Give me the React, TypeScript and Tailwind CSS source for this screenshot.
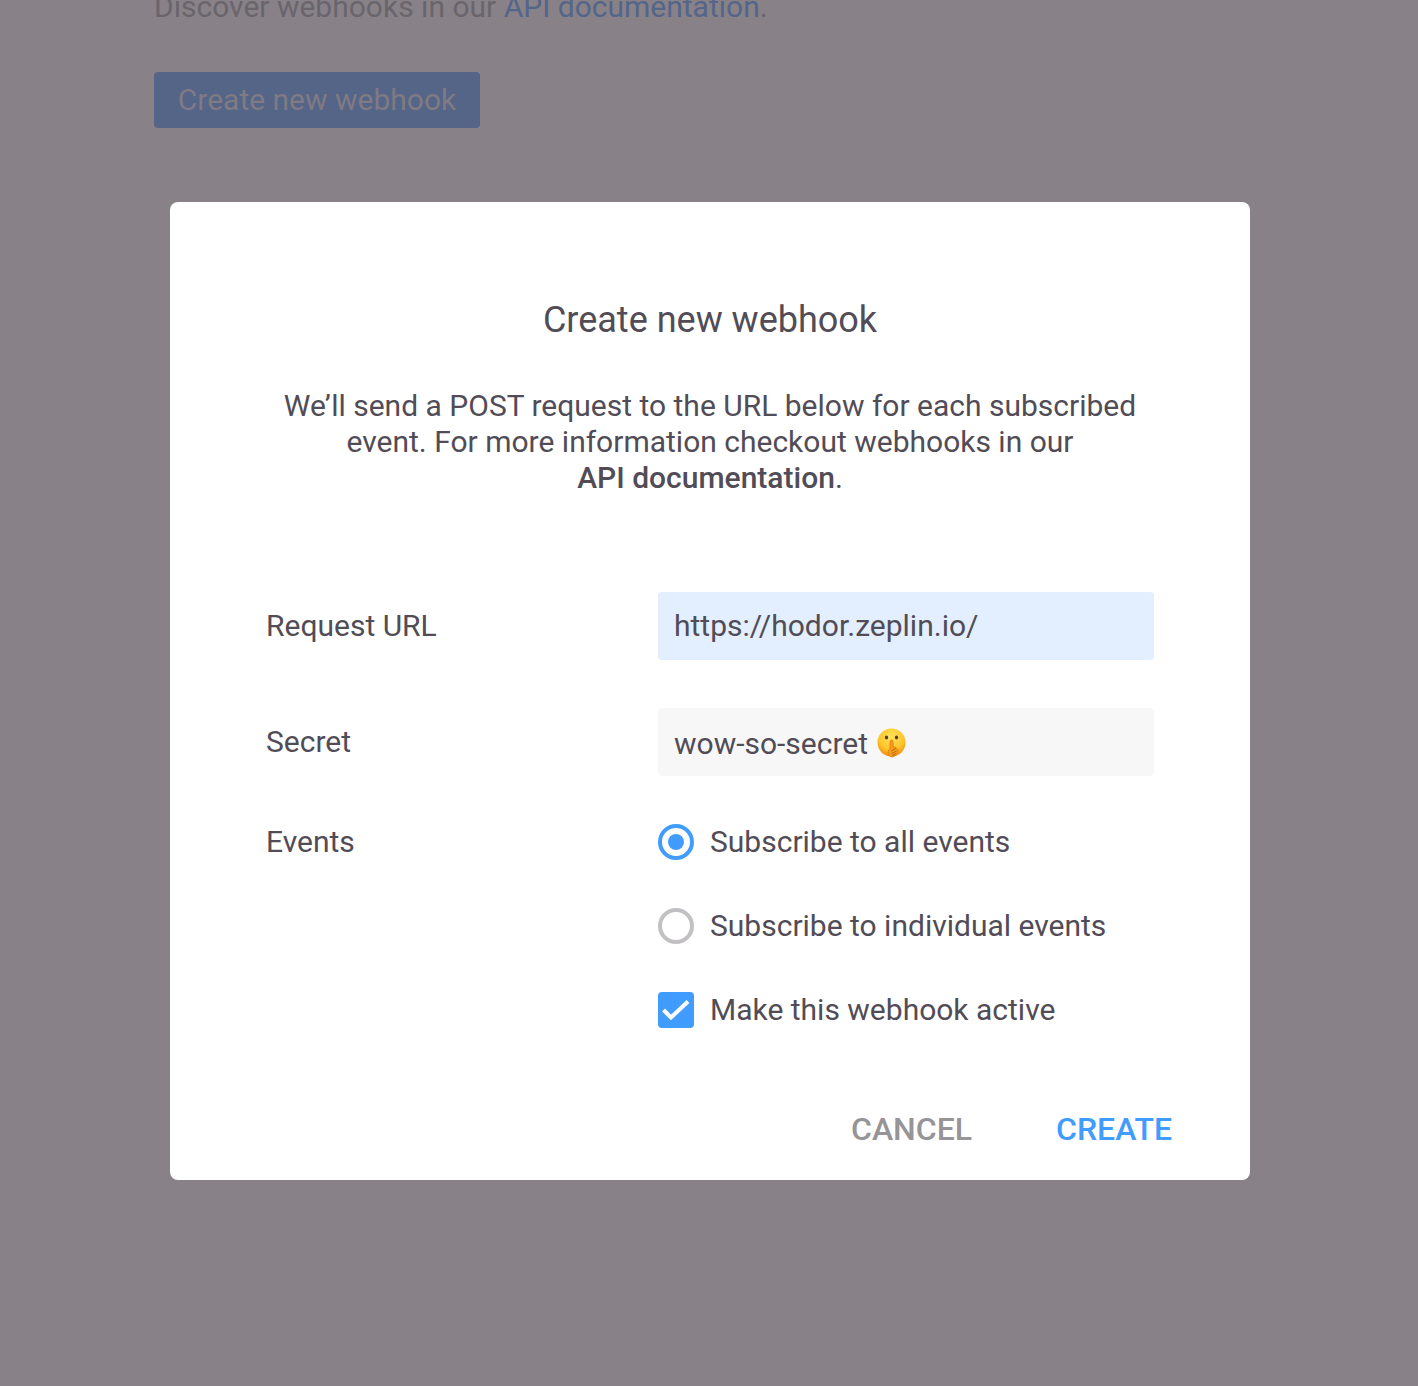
const ShushFace = () => (
  <svg width="30" height="30" viewBox="0 0 30 30" className="-mt-[2px]">
    <defs>
      <radialGradient id="face" cx="50%" cy="30%" r="70%">
        <stop offset="0%" stopColor="#ffe45a" />
        <stop offset="65%" stopColor="#fdc42c" />
        <stop offset="100%" stopColor="#f48e0e" />
      </radialGradient>
    </defs>
    <circle cx="15.5" cy="14.5" r="14" fill="url(#face)" />
    <ellipse cx="10.5" cy="9.5" rx="1.6" ry="2" fill="#5a3a1c" />
    <ellipse cx="20.5" cy="9.5" rx="1.6" ry="2" fill="#5a3a1c" />
    <path d="M14 13.5 Q14 12 15.5 12 Q17 12 17 13.5 L17.3 19 L20 19.5 Q22.5 21 22 24 Q20 28.5 16 29 Q12.5 28.5 12 25 Q12 22 14 20.5 Z" fill="#f5a01c" stroke="#d8740e" strokeWidth="0.7" />
    <path d="M15 23 L20 20.5 M15.5 25.5 L20.5 23 M16 27.5 L20 25.5" stroke="#b9600c" strokeWidth="0.9" fill="none" />
  </svg>
);

const FieldLabel = ({ children }: { children: string }) => (
  <div className="w-[392px] shrink-0">{children}</div>
);

export default function App() {
  return (
    <div className="relative h-screen overflow-hidden bg-[#888188] font-['Roboto',sans-serif] text-[30px] leading-[36px]">
      <div className="pl-[154px] -mt-[11px]">
        <p className="text-[#6a656c]">
          Discover webhooks in our <span className="text-[#54658a]">API documentation</span>.
        </p>
        <div className="mt-[47px] flex h-[56px] w-[326px] items-center justify-center rounded bg-[#546587] text-[#7f7a83]">
          Create new webhook
        </div>
      </div>

      <div className="absolute inset-0 pl-[170px] pt-[202px]">
        <div className="flex h-[978px] w-[1080px] flex-col rounded-lg bg-white px-[96px] pt-[96px] text-[#514c56]">
          <h1 className="text-center text-[36px] leading-[44px]">Create new webhook</h1>
          <p className="mt-[46px] text-center">
            We’ll send a POST request to the URL below for each subscribed
            <br />
            event. For more information checkout webhooks in our
            <br />
            <strong className="font-medium">API documentation</strong>.
          </p>

          <div className="mt-[96px] flex items-center">
            <FieldLabel>Request URL</FieldLabel>
            <div className="flex h-[68px] w-[496px] items-center rounded bg-[#e3effe] px-4">https://hodor.zeplin.io/</div>
          </div>
          <div className="mt-[48px] flex items-center">
            <FieldLabel>Secret</FieldLabel>
            <div className="flex h-[68px] w-[496px] items-center gap-[8px] rounded bg-[#f7f7f7] px-4 pt-[3px]">
              wow-so-secret <ShushFace />
            </div>
          </div>

          <div className="mt-[48px] flex">
            <FieldLabel>Events</FieldLabel>
            <div className="flex flex-col gap-[48px]">
              <label className="flex items-center gap-4">
                <span className="flex size-[36px] items-center justify-center rounded-full border-[4px] border-[#409cff]">
                  <span className="size-[16px] rounded-full bg-[#409cff]" />
                </span>
                Subscribe to all events
              </label>
              <label className="flex items-center gap-4">
                <span className="size-[36px] rounded-full border-[4px] border-[#c2c0c3]" />
                Subscribe to individual events
              </label>
              <label className="flex items-center gap-4">
                <span className="size-[36px] rounded bg-[#409cff]">
                  <svg width="36" height="36" viewBox="0 0 36 36" fill="none">
                    <path d="M5.5 18L13 25.5L30 9.5" stroke="white" strokeWidth="4" />
                  </svg>
                </span>
                Make this webhook active
              </label>
            </div>
          </div>

          <div className="mt-[82px] -mr-[18px] flex justify-end gap-[84px] text-[32px] font-medium leading-[38px]">
            <button className="font-medium text-[#979498]">CANCEL</button>
            <button className="font-medium text-[#409cff]">CREATE</button>
          </div>
        </div>
      </div>
    </div>
  );
}
